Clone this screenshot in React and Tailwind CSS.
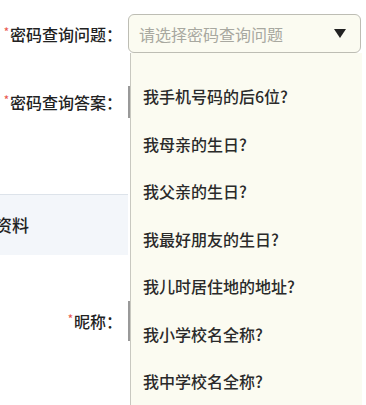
import React from 'react';

const items = [
  '我手机号码的后6位?',
  '我母亲的生日?',
  '我父亲的生日?',
  '我最好朋友的生日?',
  '我儿时居住地的地址?',
  '我小学校名全称?',
  '我中学校名全称?',
];

function Label({ text, className = '' }) {
  return (
    <div className={`w-[128px] shrink-0 pr-[6px] text-right text-[16px] font-medium text-[#222] ${className}`}>
      <span className="relative -top-[5px] mr-[1px] text-[11px] text-[#e8594f]">*</span>
      {text}
    </div>
  );
}

export default function App() {
  return (
    <div
      className="relative h-[405px] w-[366px] overflow-hidden bg-white"
      style={{ fontFamily: '"Noto Sans CJK SC", "Noto Sans", sans-serif' }}
    >
      {/* form rows */}
      <div className="flex flex-col">
        <div className="mt-[14px] flex items-center">
          <Label text="密码查询问题：" />
          <div className="flex h-[39px] w-[233px] items-center justify-between rounded-[6px] border border-[#bdbdb4] bg-[#fbfbf1] pl-[10px] pr-[14px]">
            <span className="text-[16px] text-[#a8a8a0]">请选择密码查询问题</span>
            <svg width="12" height="9" viewBox="0 0 12 9">
              <path d="M0 0 L12 0 L6 9 Z" fill="#222" />
            </svg>
          </div>
        </div>

        <div className="mt-[33px] flex items-center">
          <Label text="密码查询答案：" />
          <div className="h-[32px] w-[220px] border-l-2 border-[#999]" />
        </div>

        <div className="mt-[76px] flex h-[61px] w-[128px] items-center border-t border-[#dde3ea] bg-[#f3f6fa]">
          <span className="-ml-[5px] text-[17px] font-medium text-[#222]">资料</span>
        </div>

        <div className="mt-[46px] flex items-center">
          <Label text="昵称：" />
          <div className="h-[40px] w-[220px] border-l-2 border-[#999]" />
        </div>
      </div>

      {/* open dropdown list */}
      <div className="absolute left-[130px] top-[53px] bottom-0 w-[232px] border-l border-[#c8c8c0] bg-[#fbfbf1] pt-[31px]">
        {items.map((t) => (
          <div key={t} className="flex h-[47.5px] items-start pl-[12px] text-[16px] font-medium leading-[24px] text-[#2a2a2a]">
            {t}
          </div>
        ))}
      </div>
    </div>
  );
}
